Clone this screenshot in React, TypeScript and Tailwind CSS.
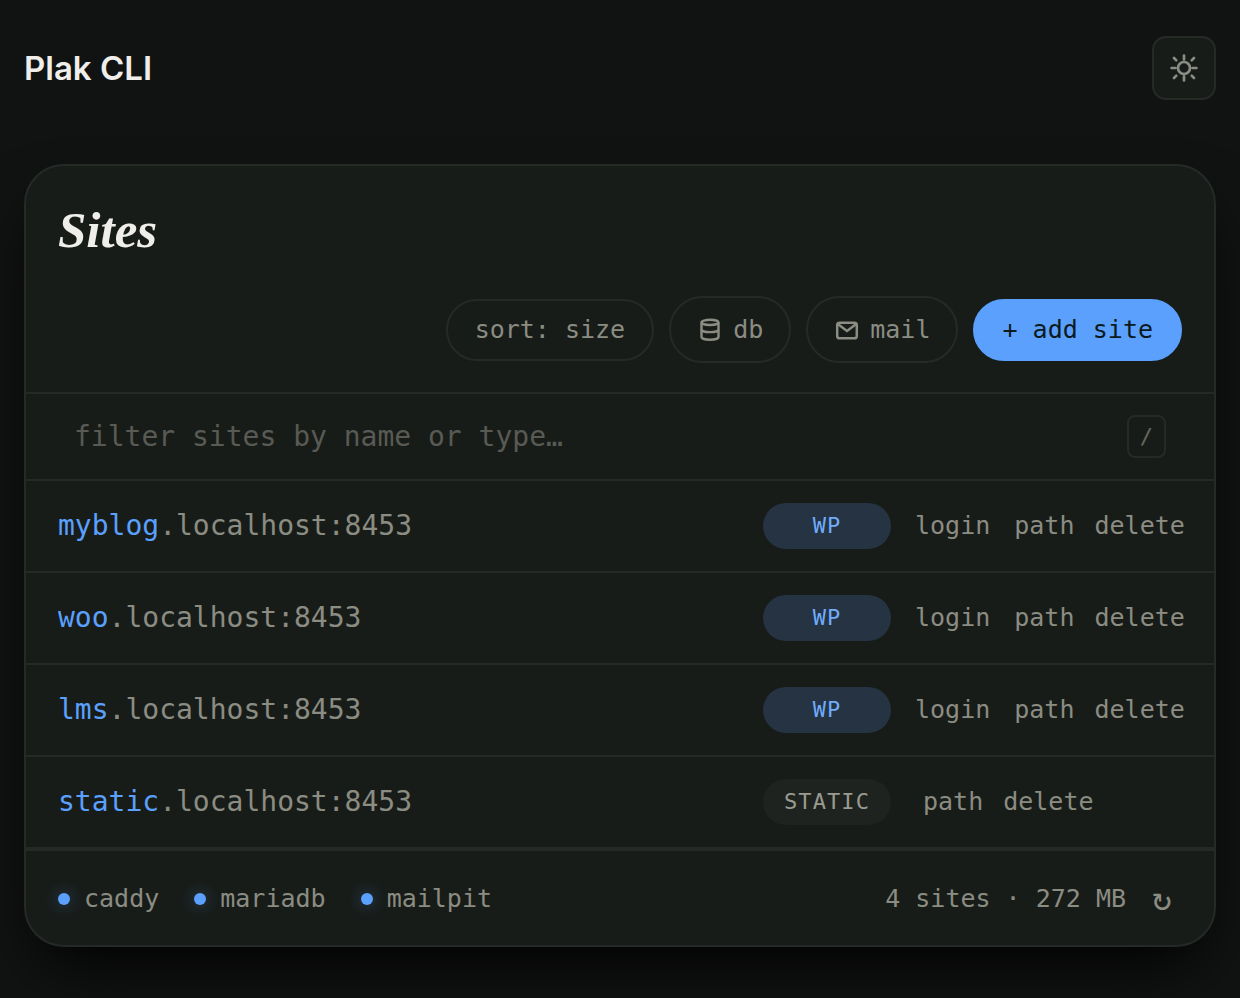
import React, { useState } from 'react';

type Site = {
  name: string;
  type: 'WP' | 'STATIC';
};

const sites: Site[] = [
  { name: 'myblog', type: 'WP' },
  { name: 'woo', type: 'WP' },
  { name: 'lms', type: 'WP' },
  { name: 'static', type: 'STATIC' },
];

const services = ['caddy', 'mariadb', 'mailpit'];

function SunIcon() {
  return (
    <svg width="28" height="28" viewBox="0 0 28 28" fill="none" stroke="currentColor" strokeWidth="2.7" strokeLinecap="round" aria-hidden="true">
      <circle cx="14" cy="14" r="6" />
      <path d="M14 1.6v4M14 22.4v4M1.6 14h4M22.4 14h4M4 4l2.3 2.4M21.7 21.6L24 24M24 4l-2.3 2.4M6.3 21.6L4 24" />
    </svg>
  );
}

function DbIcon() {
  return (
    <svg width="26" height="26" viewBox="0 0 26 26" fill="none" stroke="currentColor" strokeWidth="2.4" aria-hidden="true">
      <ellipse cx="13" cy="5.4" rx="8.5" ry="2.6" />
      <path d="M4.5 5.4v14.6c0 1.5 3.8 2.7 8.5 2.7s8.5-1.2 8.5-2.7V5.4" />
      <path d="M4.5 12.4c0 1.5 3.8 2.7 8.5 2.7s8.5-1.2 8.5-2.7" />
    </svg>
  );
}

function MailIcon() {
  return (
    <svg width="26" height="26" viewBox="0 0 26 26" fill="none" stroke="currentColor" strokeWidth="2.5" strokeLinejoin="round" aria-hidden="true">
      <rect x="3.2" y="5.7" width="19.6" height="15.6" rx="2.4" />
      <path d="M3.8 7.1L13 14.1l9.2-7" />
    </svg>
  );
}

export default function App() {
  const [query, setQuery] = useState('');

  const visibleSites = sites.filter(site =>
    `${site.name} ${site.type}`.toLowerCase().includes(query.toLowerCase())
  );

  return (
    <main className="min-h-screen bg-[#111312] px-6 pt-9 pb-[52px] font-['DejaVu_Sans_Mono',monospace] text-[25px] leading-8 text-[#8b8c82]">
      {/* Header */}
      <header className="flex items-center justify-between mb-16">
        <h1 className="font-['Inter',sans-serif] text-[33px] leading-10 font-semibold text-[#efeeea]">Plak CLI</h1>
        <button
          aria-label="Toggle theme"
          className="flex h-16 w-16 items-center justify-center rounded-[14px] border-2 border-[#252a27] bg-[#181c19]"
        >
          <SunIcon />
        </button>
      </header>

      <section className="rounded-[40px] border-2 border-[#252a27] bg-[#181c19] shadow-[0_32px_64px_-16px_#000000]">
        {/* Title and actions */}
        <div className="border-b-2 border-[#252a27] px-8 pt-8 pb-[29px]">
          <h2 className="mb-[34px] font-['Liberation_Serif',serif] text-[51px] leading-[64px] font-bold italic text-[#efeeea]">Sites</h2>
          <div className="flex flex-wrap items-center justify-end gap-[15px]">
            <button className="h-[62px] rounded-full border-2 border-[#252a27] px-[27px]">sort: size</button>
            <button className="flex h-[67px] items-center gap-[10px] rounded-full border-2 border-[#252a27] px-[26px]">
              <DbIcon />
              db
            </button>
            <button className="flex h-[67px] items-center gap-[10px] rounded-full border-2 border-[#252a27] px-[26px]">
              <MailIcon />
              mail
            </button>
            <button className="h-[62px] rounded-full border-2 border-[#5aa0fc] bg-[#5aa0fc] px-[27px] text-[#0b1a20]">+ add site</button>
          </div>
        </div>

        {/* Filter */}
        <div className="flex items-center border-b-2 border-[#252a27] px-12 py-[21px]">
          <input
            type="text"
            aria-label="Filter sites"
            value={query}
            onChange={e => setQuery(e.target.value)}
            placeholder="filter sites by name or type…"
            className="h-[43px] min-w-0 flex-1 bg-transparent text-[28px] outline-none placeholder:text-[#585a53]"
          />
          <kbd className="rounded-lg border-2 border-[#252a27] px-[11px] py-1 font-['DejaVu_Sans_Mono',monospace] text-[22px] leading-[31px] text-[#66685f]">/</kbd>
        </div>

        {/* Site list */}
        <ul>
          {visibleSites.map(site => (
            <li key={site.name} className="flex items-center border-b-2 border-[#252a27] pl-8 py-[22px]">
              <a href="#" className="min-w-0 flex-1 truncate text-[28px] leading-10">
                <span className="text-[#5aa0fc]">{site.name}</span>.localhost:8453
              </a>
              <span
                className={`w-32 rounded-full text-center text-[22px] leading-[46px] tracking-wider ${
                  site.type === 'WP' ? 'bg-[#253342] text-[#6fadfb]' : 'bg-[#1f2320] text-[#9a9b90]'
                }`}
              >
                {site.type}
              </span>
              <div className="flex w-[323px] gap-1 pl-6">
                {site.type === 'WP' && <button className="mr-3">login</button>}
                <button className="px-2">path</button>
                <button className="px-2">delete</button>
              </div>
            </li>
          ))}
        </ul>

        {/* Status bar */}
        <footer className="flex flex-wrap items-center justify-between border-t-2 border-[#252a27] px-8 pt-8 pb-[30px]">
          <ul className="flex gap-[35px]">
            {services.map(service => (
              <li key={service} className="flex items-center gap-[14px]">
                <span className="h-3 w-3 rounded-full bg-[#5aa0fc] shadow-[0_0_16px_#5aa0fc66]" />
                {service}
              </li>
            ))}
          </ul>
          <div className="flex items-center gap-4">
            <span>4 sites · 272 MB</span>
            <button aria-label="Refresh" className="w-10 text-center text-[33px] leading-8">↻</button>
          </div>
        </footer>
      </section>
    </main>
  );
}
